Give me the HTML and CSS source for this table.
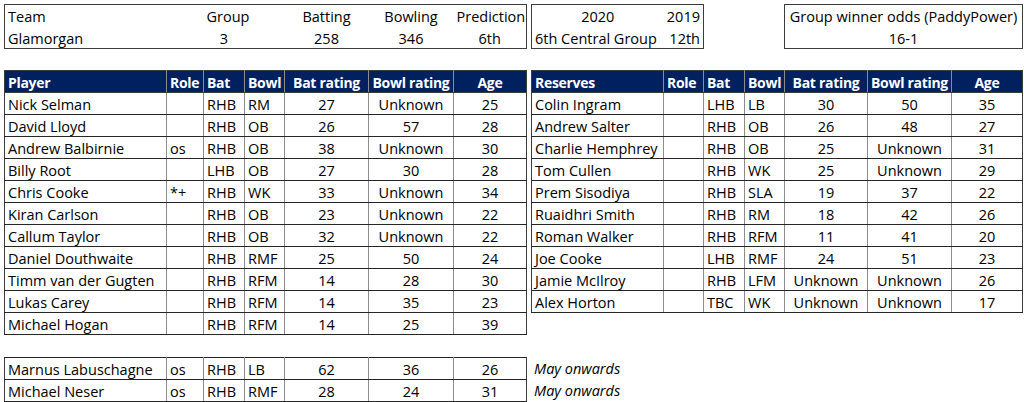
FILE: index.html
```html
<!DOCTYPE html>
<html lang="en">
<head>
<meta charset="utf-8">
<title>Glamorgan squad</title>
<link rel="stylesheet" href="styles.css">
</head>
<body>
<div class="sheet">
  <table class="box box-team">
    <colgroup><col class="w162"><col class="w37"><col class="w41"><col class="w40"><col class="w84"><col class="w85"><col class="w73"></colgroup>
    <tr><td colspan="2">Team</td><td class="c">Group</td><td></td><td class="c">Batting</td><td class="c">Bowling</td><td class="c">Prediction</td></tr>
    <tr><td colspan="2">Glamorgan</td><td class="c">3</td><td></td><td class="c">258</td><td class="c">346</td><td class="c">6th</td></tr>
  </table>

  <div class="top-right">
    <table class="box box-years">
      <colgroup><col class="w132"><col class="w40"></colgroup>
      <tr><td class="c">2020</td><td class="r">2019</td></tr>
      <tr><td>6th Central Group</td><td class="r">12th</td></tr>
    </table>
    <table class="box box-odds">
      <colgroup><col class="w238"></colgroup>
      <tr><td class="c">Group winner odds (PaddyPower)</td></tr>
      <tr><td class="c">16-1</td></tr>
    </table>
  </div>

  <table class="grid main">
    <colgroup><col class="w162"><col class="w37"><col class="w41"><col class="w40"><col class="w84"><col class="w85"><col class="w73"></colgroup>
    <tr class="head"><th>Player</th><th>Role</th><th>Bat</th><th>Bowl</th><th class="c">Bat rating</th><th class="c">Bowl rating</th><th class="c">Age</th></tr>
    <tr><td>Nick Selman</td><td></td><td>RHB</td><td>RM</td><td class="c">27</td><td class="c">Unknown</td><td class="c">25</td></tr>
    <tr><td>David Lloyd</td><td></td><td>RHB</td><td>OB</td><td class="c">26</td><td class="c">57</td><td class="c">28</td></tr>
    <tr><td>Andrew Balbirnie</td><td>os</td><td>RHB</td><td>OB</td><td class="c">38</td><td class="c">Unknown</td><td class="c">30</td></tr>
    <tr><td>Billy Root</td><td></td><td>LHB</td><td>OB</td><td class="c">27</td><td class="c">30</td><td class="c">28</td></tr>
    <tr><td>Chris Cooke</td><td>*+</td><td>RHB</td><td>WK</td><td class="c">33</td><td class="c">Unknown</td><td class="c">34</td></tr>
    <tr><td>Kiran Carlson</td><td></td><td>RHB</td><td>OB</td><td class="c">23</td><td class="c">Unknown</td><td class="c">22</td></tr>
    <tr><td>Callum Taylor</td><td></td><td>RHB</td><td>OB</td><td class="c">32</td><td class="c">Unknown</td><td class="c">22</td></tr>
    <tr><td>Daniel Douthwaite</td><td></td><td>RHB</td><td>RMF</td><td class="c">25</td><td class="c">50</td><td class="c">24</td></tr>
    <tr><td>Timm van der Gugten</td><td></td><td>RHB</td><td>RFM</td><td class="c">14</td><td class="c">28</td><td class="c">30</td></tr>
    <tr><td>Lukas Carey</td><td></td><td>RHB</td><td>RFM</td><td class="c">14</td><td class="c">35</td><td class="c">23</td></tr>
    <tr><td>Michael Hogan</td><td></td><td>RHB</td><td>RFM</td><td class="c">14</td><td class="c">25</td><td class="c">39</td></tr>
  </table>

  <table class="grid reserves">
    <colgroup><col class="w132"><col class="w40"><col class="w41"><col class="w40"><col class="w83"><col class="w84"><col class="w71"></colgroup>
    <tr class="head"><th>Reserves</th><th>Role</th><th>Bat</th><th>Bowl</th><th class="c">Bat rating</th><th class="c">Bowl rating</th><th class="c">Age</th></tr>
    <tr><td>Colin Ingram</td><td></td><td>LHB</td><td>LB</td><td class="c">30</td><td class="c">50</td><td class="c">35</td></tr>
    <tr><td>Andrew Salter</td><td></td><td>RHB</td><td>OB</td><td class="c">26</td><td class="c">48</td><td class="c">27</td></tr>
    <tr><td>Charlie Hemphrey</td><td></td><td>RHB</td><td>OB</td><td class="c">25</td><td class="c">Unknown</td><td class="c">31</td></tr>
    <tr><td>Tom Cullen</td><td></td><td>RHB</td><td>WK</td><td class="c">25</td><td class="c">Unknown</td><td class="c">29</td></tr>
    <tr><td>Prem Sisodiya</td><td></td><td>RHB</td><td>SLA</td><td class="c">19</td><td class="c">37</td><td class="c">22</td></tr>
    <tr><td>Ruaidhri Smith</td><td></td><td>RHB</td><td>RM</td><td class="c">18</td><td class="c">42</td><td class="c">26</td></tr>
    <tr><td>Roman Walker</td><td></td><td>RHB</td><td>RFM</td><td class="c">11</td><td class="c">41</td><td class="c">20</td></tr>
    <tr><td>Joe Cooke</td><td></td><td>LHB</td><td>RMF</td><td class="c">24</td><td class="c">51</td><td class="c">23</td></tr>
    <tr><td>Jamie McIlroy</td><td></td><td>RHB</td><td>LFM</td><td class="c">Unknown</td><td class="c">Unknown</td><td class="c">26</td></tr>
    <tr><td>Alex Horton</td><td></td><td>TBC</td><td>WK</td><td class="c">Unknown</td><td class="c">Unknown</td><td class="c">17</td></tr>
  </table>

  <table class="grid extra">
    <colgroup><col class="w162"><col class="w37"><col class="w41"><col class="w40"><col class="w84"><col class="w85"><col class="w73"></colgroup>
    <tr><td>Marnus Labuschagne</td><td>os</td><td>RHB</td><td>LB</td><td class="c">62</td><td class="c">36</td><td class="c">26</td></tr>
    <tr><td>Michael Neser</td><td>os</td><td>RHB</td><td>RMF</td><td class="c">28</td><td class="c">24</td><td class="c">31</td></tr>
  </table>

  <div class="notes">
    <div class="note">May onwards</div>
    <div class="note">May onwards</div>
  </div>
</div>
</body>
</html>
```

FILE: styles.css
```css
html, body {
  margin: 0;
  background: #ffffff;
}

body {
  padding: 4px 0 0 4px;
  font-family: "Open Sans", "Noto Sans", sans-serif;
  font-size: 14.5px;
  color: #000000;
}

.sheet {
  display: grid;
  grid-template-columns: 523px 492px;
  column-gap: 4px;
  row-gap: 21px;
  align-items: start;
}

table {
  border-collapse: collapse;
  table-layout: fixed;
}

tr {
  height: 22px;
}

td, th {
  padding: 2px 3px 0;
  line-height: 19px;
  vertical-align: top;
  white-space: nowrap;
  overflow: visible;
  text-align: left;
  font-weight: 400;
}

.c { text-align: center; }
.r { text-align: right; }

col.w162 { width: 162px; }
col.w37 { width: 37px; }
col.w41 { width: 41px; }
col.w40 { width: 40px; }
col.w84 { width: 84px; }
col.w85 { width: 85px; }
col.w73 { width: 73px; }
col.w132 { width: 132px; }
col.w83 { width: 83px; }
col.w71 { width: 71px; }
col.w238 { width: 238px; }

/* outlined info boxes */
.box {
  border: 1px solid #3c3c3c;
}

.box-team { width: 523px; }
.box-years { width: 173px; }
.box-odds { width: 239px; margin-left: 80px; }

.top-right {
  display: flex;
  align-items: flex-start;
}

/* data grids */
.grid td, .grid th {
  border-top: 1px solid #262626;
  border-bottom: 1px solid #262626;
  border-left: 1px solid #8c8c8c;
  border-right: 1px solid #8c8c8c;
}

.grid td:first-child, .grid th:first-child {
  border-left-color: #3c3c3c;
}

.grid td:last-child, .grid th:last-child {
  border-right-color: #3c3c3c;
}

.main, .extra { width: 523px; }
.reserves { width: 492px; }

.head th {
  background: #002060;
  color: #ffffff;
  font-weight: 700;
  font-size: 14px;
  letter-spacing: -0.3px;
  border-top-color: #3c3c3c;
  border-bottom-color: #3c3c3c;
}

.extra {
  margin-top: 1px;
}

.notes {
  margin-top: 1px;
  display: flex;
  flex-direction: column;
}

.note {
  height: 22px;
  line-height: 23px;
  padding-left: 3px;
  font-style: italic;
}
```
